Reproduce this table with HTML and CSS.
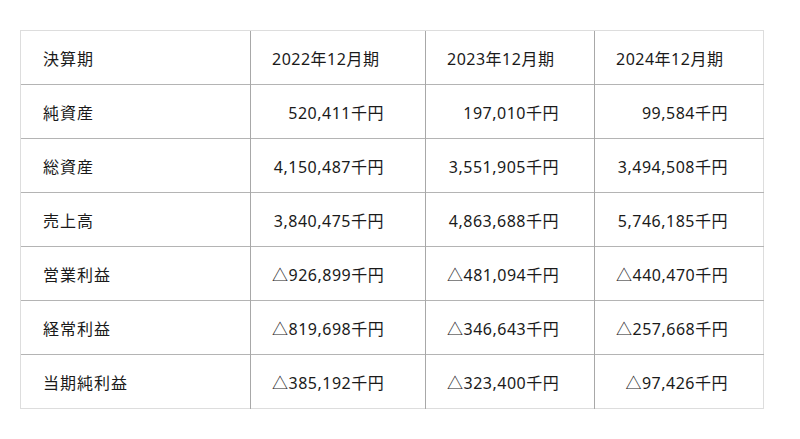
FILE: index.html
```html
<!DOCTYPE html>
<html lang="ja">
<head>
<meta charset="utf-8">
<title>業績</title>
<link rel="stylesheet" href="styles.css">
</head>
<body>
<table class="fin">
  <colgroup><col class="c1"><col class="c2"><col class="c3"><col class="c4"></colgroup>
  <tr><th class="lbl">決算期</th><th class="val"><span>2022年12月期</span></th><th class="val"><span>2023年12月期</span></th><th class="val"><span>2024年12月期</span></th></tr>
  <tr><td class="lbl">純資産</td><td class="val"><span class="num">520,411千円</span></td><td class="val"><span class="num">197,010千円</span></td><td class="val"><span class="num">99,584千円</span></td></tr>
  <tr><td class="lbl">総資産</td><td class="val"><span class="num">4,150,487千円</span></td><td class="val"><span class="num">3,551,905千円</span></td><td class="val"><span class="num">3,494,508千円</span></td></tr>
  <tr><td class="lbl">売上高</td><td class="val"><span class="num">3,840,475千円</span></td><td class="val"><span class="num">4,863,688千円</span></td><td class="val"><span class="num">5,746,185千円</span></td></tr>
  <tr><td class="lbl">営業利益</td><td class="val"><span class="num">△926,899千円</span></td><td class="val"><span class="num">△481,094千円</span></td><td class="val"><span class="num">△440,470千円</span></td></tr>
  <tr><td class="lbl">経常利益</td><td class="val"><span class="num">△819,698千円</span></td><td class="val"><span class="num">△346,643千円</span></td><td class="val"><span class="num">△257,668千円</span></td></tr>
  <tr><td class="lbl">当期純利益</td><td class="val"><span class="num">△385,192千円</span></td><td class="val"><span class="num">△323,400千円</span></td><td class="val"><span class="num">△97,426千円</span></td></tr>
</table>
</body>
</html>
```
FILE: styles.css
```css
html, body {
  margin: 0;
  padding: 0;
  background: #ffffff;
}
body {
  padding: 30px 0 0 20px;
  font-family: "Noto Sans", "Noto Sans CJK JP", sans-serif;
  font-size: 16px;
  color: #1a1a1a;
}
.fin {
  border-collapse: collapse;
  table-layout: fixed;
  width: 743px;
  border: 1px solid #dddddd;
}
.c1 { width: 230px; }
.c2 { width: 175px; }
.c3 { width: 169px; }
.c4 { width: 169px; }
.fin th, .fin td {
  box-sizing: border-box;
  height: 54px;
  padding: 0;
  font-weight: normal;
  text-align: left;
  white-space: nowrap;
  vertical-align: middle;
  border-top: 1px solid #b4b4b4;
  border-left: 1px solid #a8a8a8;
}
.fin tr:first-child th { border-top: 1px solid #dddddd; }
.fin .lbl { padding-left: 22px; letter-spacing: 1px; border-left: 1px solid #dddddd; }
.fin .val { padding-left: 21px; letter-spacing: 0.5px; }
.num {
  display: inline-block;
  width: 112px;
  text-align: right;
}
```
